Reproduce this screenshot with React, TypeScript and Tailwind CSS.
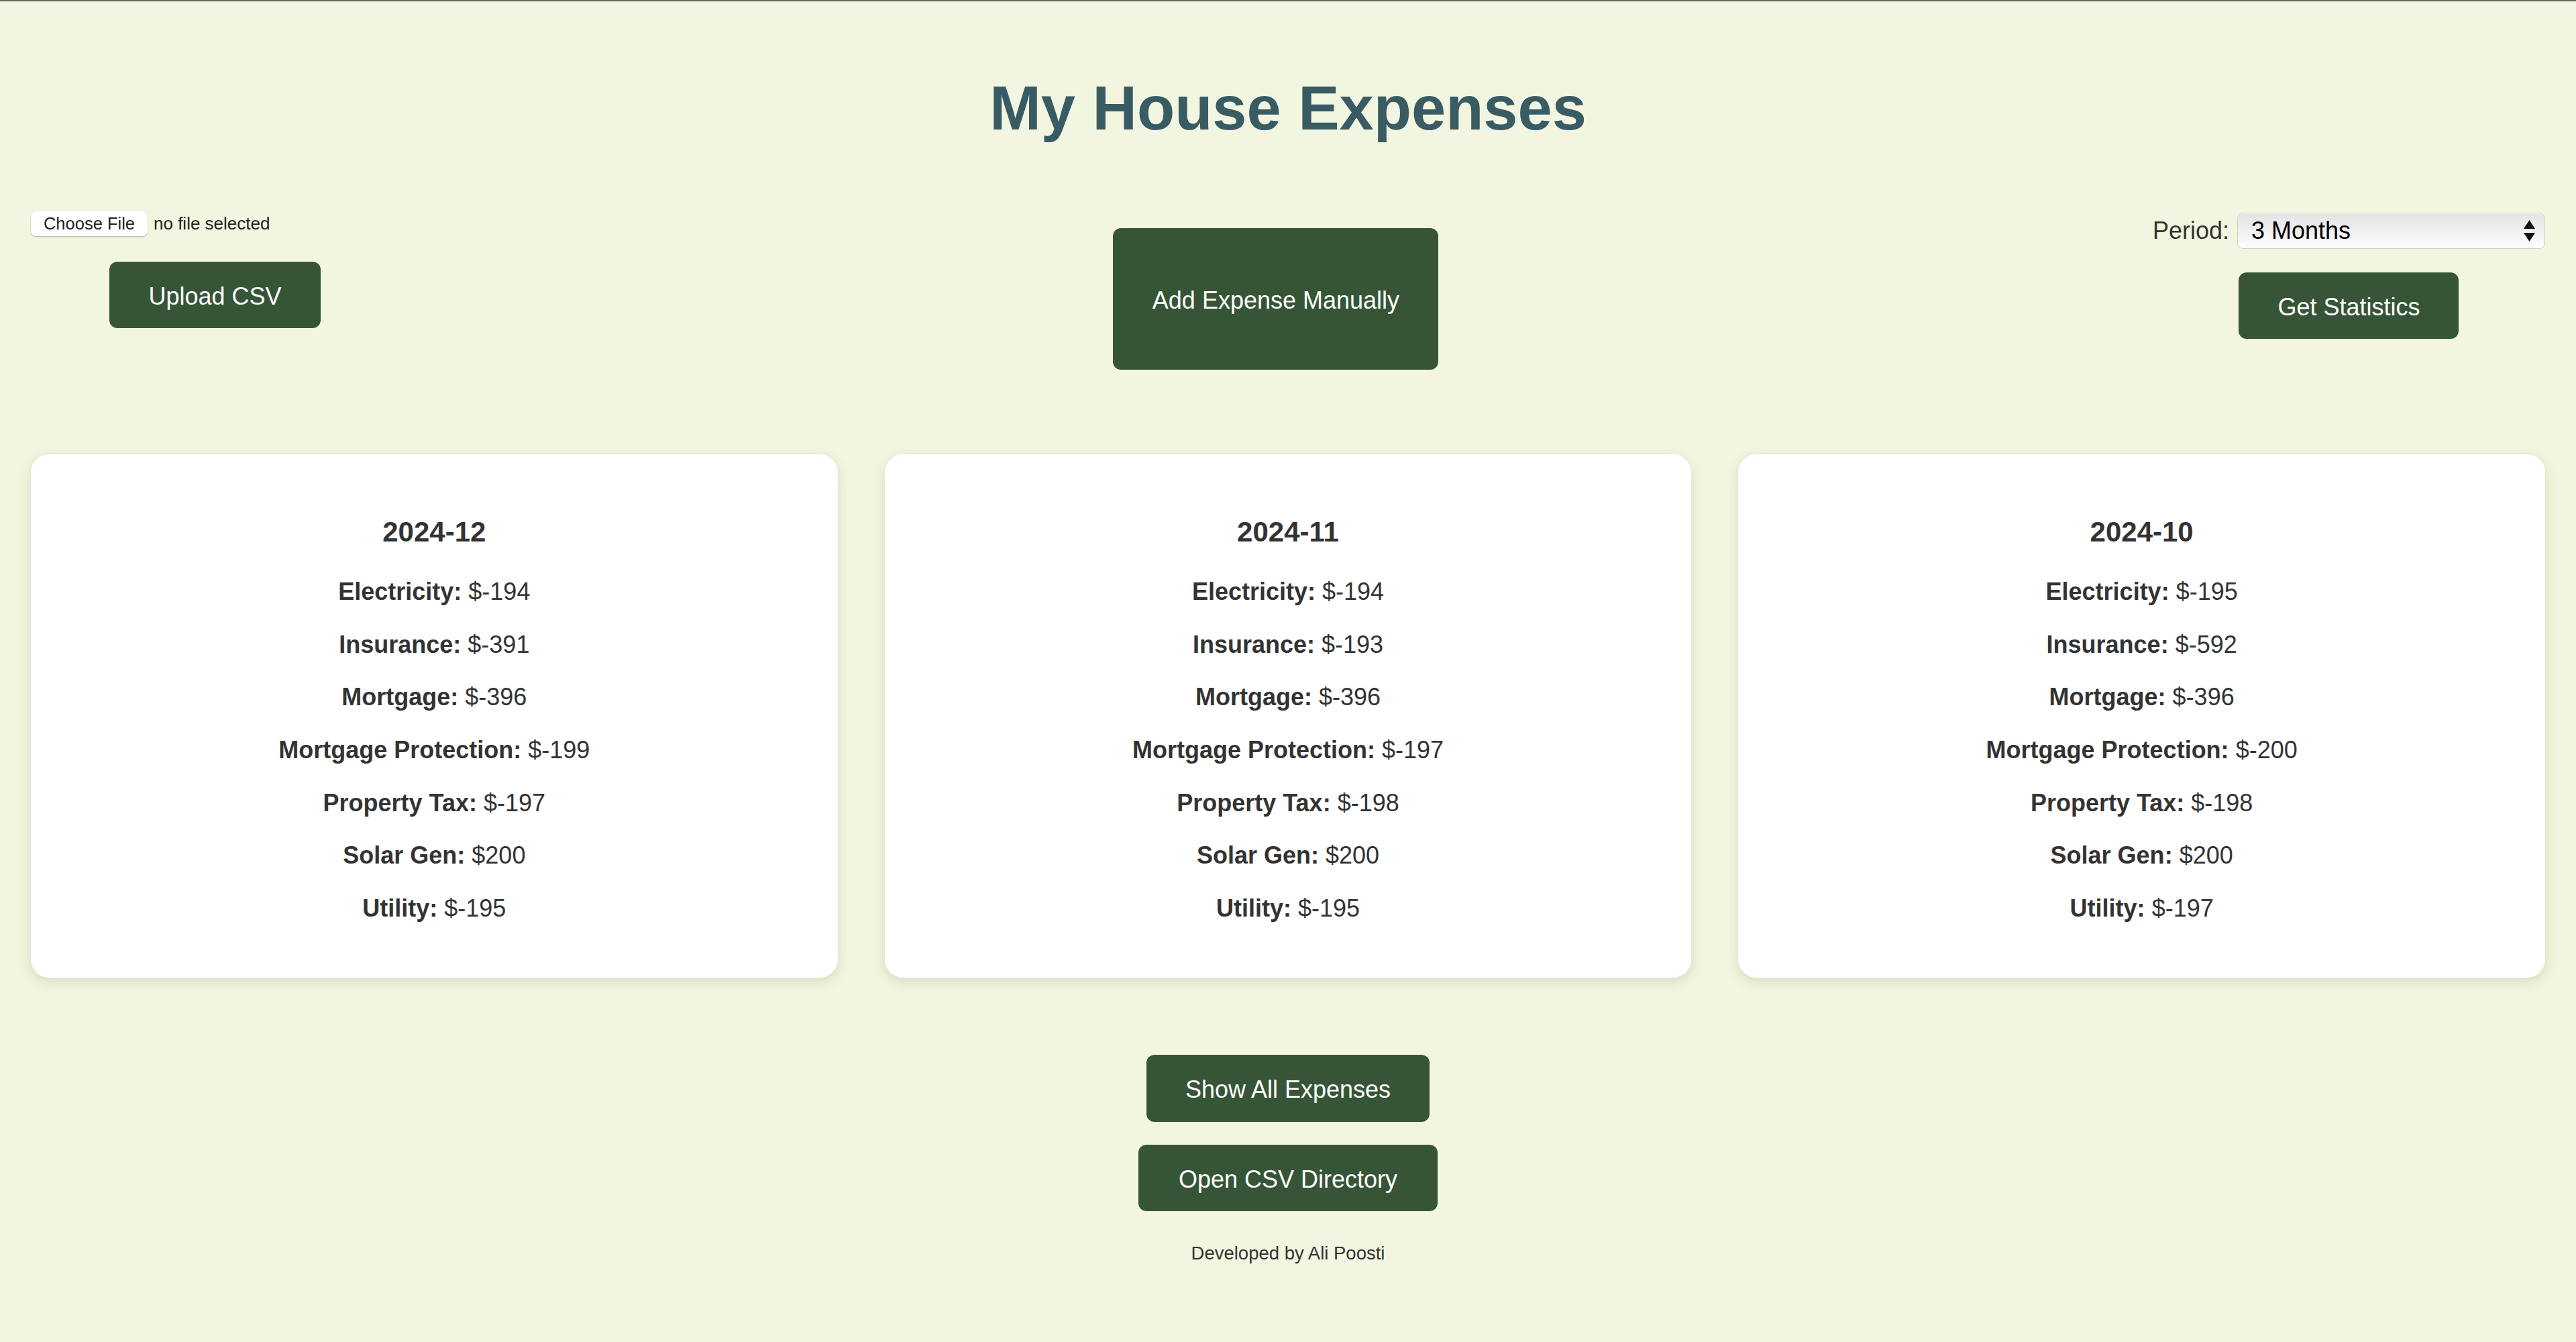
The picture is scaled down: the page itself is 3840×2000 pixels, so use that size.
import React from "react";

type Month = {
  label: string;
  items: [string, string][];
};

const months: Month[] = [
  {
    label: "2024-12",
    items: [
      ["Electricity", "$-194"],
      ["Insurance", "$-391"],
      ["Mortgage", "$-396"],
      ["Mortgage Protection", "$-199"],
      ["Property Tax", "$-197"],
      ["Solar Gen", "$200"],
      ["Utility", "$-195"],
    ],
  },
  {
    label: "2024-11",
    items: [
      ["Electricity", "$-194"],
      ["Insurance", "$-193"],
      ["Mortgage", "$-396"],
      ["Mortgage Protection", "$-197"],
      ["Property Tax", "$-198"],
      ["Solar Gen", "$200"],
      ["Utility", "$-195"],
    ],
  },
  {
    label: "2024-10",
    items: [
      ["Electricity", "$-195"],
      ["Insurance", "$-592"],
      ["Mortgage", "$-396"],
      ["Mortgage Protection", "$-200"],
      ["Property Tax", "$-198"],
      ["Solar Gen", "$200"],
      ["Utility", "$-197"],
    ],
  },
];

const GreenButton: React.FC<{
  children: React.ReactNode;
  className?: string;
}> = ({ children, className = "" }) => (
  <button
    type="button"
    className={`flex items-center justify-center whitespace-nowrap rounded-[12px] bg-[#365537] px-[58px] pt-[4px] text-[36px] leading-[42px] text-white ${className}`}
  >
    {children}
  </button>
);

const MonthCard: React.FC<{ data: Month }> = ({ data: { label, items } }) => (
  <div className="flex flex-col items-center rounded-[27px] bg-white pt-[92px] pb-[82px] text-[#333] shadow-[0_6px_18px_rgba(90,95,60,0.16)]">
    <h3 className="text-[42px] leading-[48px] font-bold">{label}</h3>
    <div className="mt-[43px] flex flex-col items-center gap-[35.7px]">
      {items.map(([name, value]) => (
        <p key={name} className="text-[36px] leading-[43px]">
          <b>{name}:</b> {value}
        </p>
      ))}
    </div>
  </div>
);

export default function App() {
  return (
    <div
      className="min-h-screen border-t-2 border-[#66665c] bg-[#f2f5df] pb-[80px]"
      style={{ fontFamily: '"Liberation Sans", Arial, Helvetica, sans-serif' }}
    >
      <h1 className="mt-[113px] text-center text-[92px] leading-[92px] font-bold text-[#395b64]">
        My House Expenses
      </h1>

      <div className="mt-[107px] flex items-start justify-between px-[46px]">
        {/* upload */}
        <div className="flex w-[549px] flex-col items-center">
          <div className="flex items-center self-start">
            <span className="flex h-[37px] w-[174px] items-center justify-center rounded-[8px] bg-white text-[25.5px] text-[#222] shadow-[0_1px_2px_rgba(0,0,0,0.3)]">
              Choose File
            </span>
            <span className="ml-[9px] text-[26px] text-[#222]">
              no file selected
            </span>
          </div>
          <GreenButton className="mt-[37px] h-[99px]">Upload CSV</GreenButton>
        </div>

        <GreenButton className="mt-[26px] h-[211px] w-[485px]">
          Add Expense Manually
        </GreenButton>

        {/* stats */}
        <div className="mt-[3px] flex flex-col items-center">
          <div className="flex items-center">
            <span className="text-[36px] text-[#333]">Period:</span>
            <div className="ml-[12px] flex h-[54px] w-[459px] items-center justify-between rounded-[9px] border border-[#cdcdcd] bg-linear-to-b from-[#e3e3e3] to-[#fefefe] pr-[14px] pl-[20px] shadow-[inset_0_1px_1px_rgba(255,255,255,0.8)]">
              <span className="text-[36px] text-black">3 Months</span>
              <svg width="17" height="33" viewBox="0 0 17 33">
                <path d="M8.5 0 L17 13 L0 13 Z" fill="#111" />
                <path d="M0 19 L17 19 L8.5 32 Z" fill="#111" />
              </svg>
            </div>
          </div>
          <GreenButton className="mt-[35px] h-[99px]">Get Statistics</GreenButton>
        </div>
      </div>

      <div className="mt-[126px] grid grid-cols-3 gap-[70px] px-[46px]">
        {months.map((m) => (
          <MonthCard key={m.label} data={m} />
        ))}
      </div>

      <div className="mt-[115px] flex flex-col items-center">
        <GreenButton className="h-[100px] w-[422px] px-0">
          Show All Expenses
        </GreenButton>
        <GreenButton className="mt-[34px] h-[99px] w-[446px] px-0">
          Open CSV Directory
        </GreenButton>
        <p className="mt-[47px] text-[27.5px] leading-[32px] text-[#333]">
          Developed by Ali Poosti
        </p>
      </div>
    </div>
  );
}
